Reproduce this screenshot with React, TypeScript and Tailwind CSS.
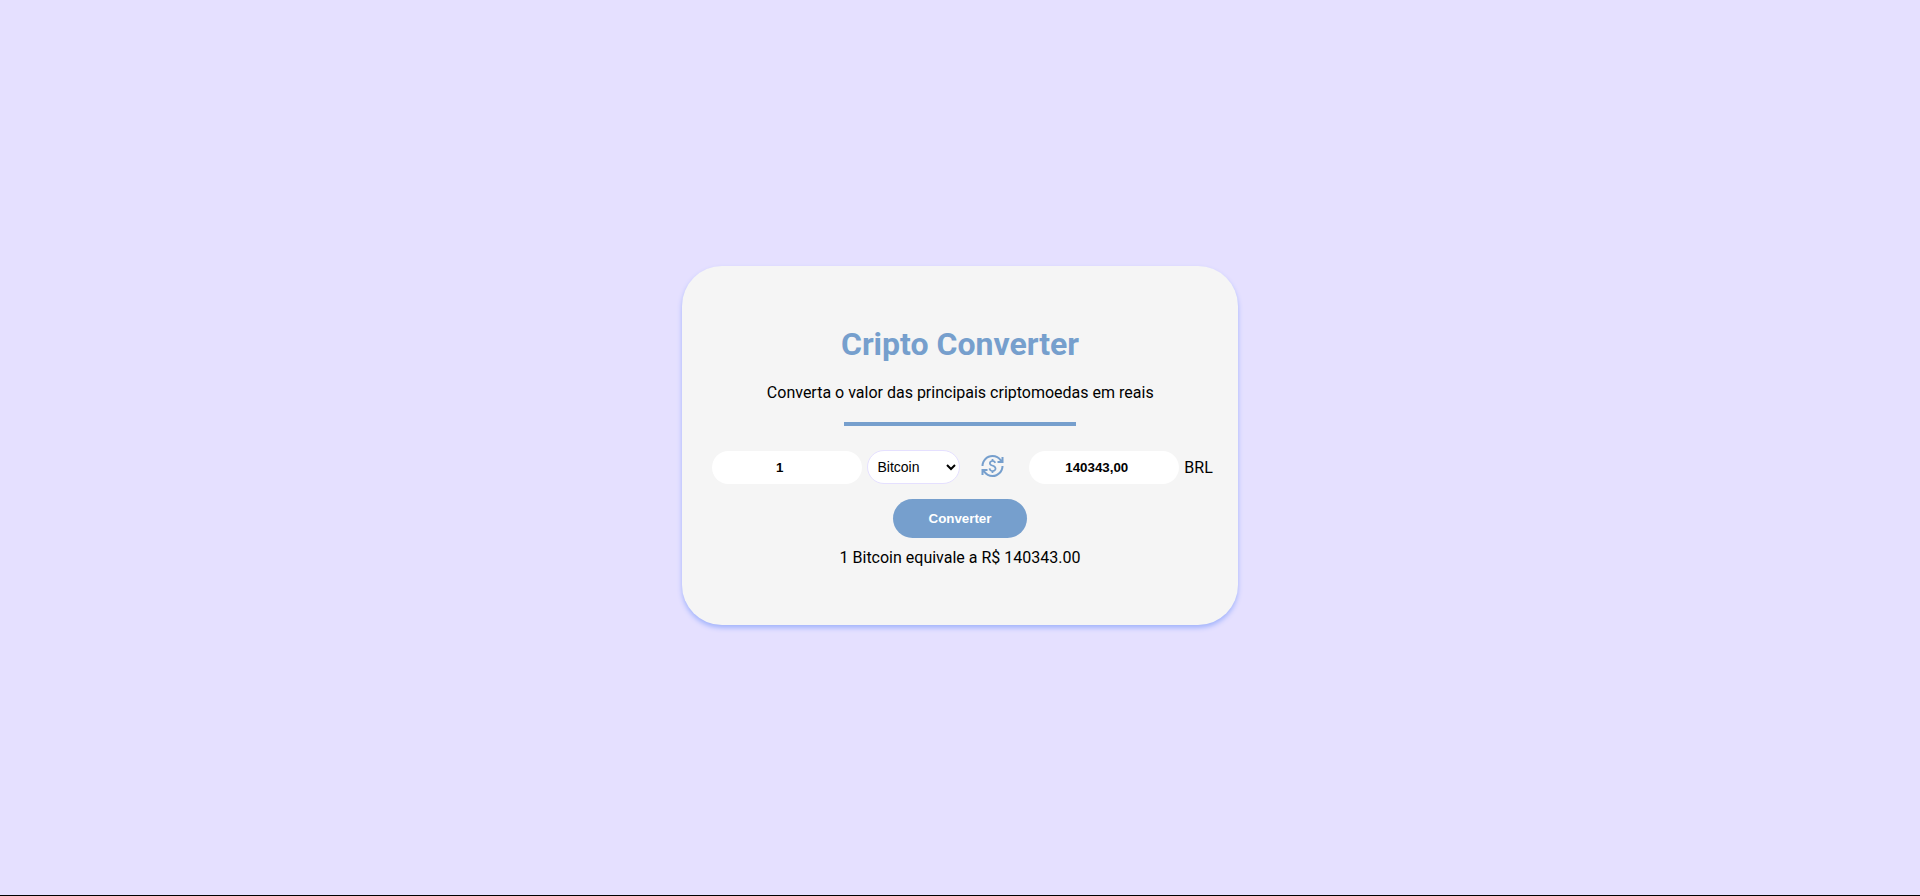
import { useState } from "react";

const coins = ["Bitcoin", "Ethereum", "Litecoin"];

const fieldClass =
  "mt-px h-[33px] w-[150px] rounded-[20px] bg-white pr-[14.5px] text-center font-['Liberation_Sans',Arial,sans-serif] text-[13.333px] font-bold text-black outline-none";

function ExchangeIcon({ className }: { className: string }) {
  return (
    <svg viewBox="0 -960 960 960" fill="currentColor" className={className} aria-hidden="true">
      <path
        transform="translate(20 0)"
        d="M480-40q-112 0-206-51T120-227v107H40v-240h240v80h-99q48 72 126.5 116T480-120q75 0 140.5-28.5t114-77q48.5-48.5 77-114T840-480h80q0 91-34.5 171T791-169q-60 60-140 94.5T480-40Zm-36-160v-52q-47-11-76.5-40.5T324-370l66-26q12 41 37.5 61.5T486-314q33 0 56.5-15.5T566-378q0-29-24.5-47T454-466q-59-21-86.5-50T340-592q0-41 28.5-74.5T446-710v-50h70v50q36 3 65.5 29t40.5 61l-64 26q-8-23-26-38.5T482-648q-35 0-53.5 15T410-592q0 26 23 41t83 35q72 26 96 61t24 77q0 29-10 51t-26.5 37.5Q583-274 561-264.5T514-250v50h-70ZM40-480q0-91 34.5-171T169-791q60-60 140-94.5T480-920q112 0 206 51t154 136v-107h80v240H680v-80h99q-48-72-126.5-116T480-840q-75 0-140.5 28.5t-114 77q-48.5 48.5-77 114T120-480H40Z"
      />
    </svg>
  );
}

export default function App() {
  const [amount, setAmount] = useState("1");
  const [coin, setCoin] = useState("Bitcoin");

  return (
    <div className="flex h-screen flex-col bg-black font-['Roboto',sans-serif] text-base text-black">
      <main className="flex h-[895px] items-start justify-center bg-[#e5e0ff] pt-[266px]">
        <section className="flex h-[359px] w-[556px] flex-col items-center rounded-[40px] bg-[#f5f5f5] pt-[59px] shadow-[0_3px_5px_#a3b4fc]">
          <h1 className="text-[32px] leading-[38px] font-bold text-[#769fcd]">Cripto Converter</h1>
          <p className="mt-[20px] pl-[0.5px] leading-[19px]">Converta o valor das principais criptomoedas em reais</p>
          <hr className="mt-[20px] h-1 w-[232px] border-0 bg-[#769fcd]" />
          <form className="mt-6 flex w-full flex-col items-center" onSubmit={(e) => e.preventDefault()}>
            <div className="flex h-[34px] w-full items-center pl-[30px]">
              <input className={fieldClass} value={amount} onChange={(e) => setAmount(e.target.value)} />
              <select
                className="ml-[5px] h-[34px] w-[93px] rounded-[20px] border border-[#e5e0ff] bg-white pr-[5px] pl-[5.5px] font-['Liberation_Sans',Arial,sans-serif] text-[14px] text-black outline-none"
                value={coin}
                onChange={(e) => setCoin(e.target.value)}
              >
                {coins.map((name) => (
                  <option key={name}>{name}</option>
                ))}
              </select>
              <ExchangeIcon className="mb-[2px] ml-[20px] size-6 text-[#769fcd]" />
              <input className={`${fieldClass} ml-[25px]`} value="140343,00" readOnly />
              <span className="ml-[5.3px] leading-[19px]">BRL</span>
            </div>
            <button
              type="submit"
              className="mt-[15px] h-[39px] w-[134px] rounded-[20px] bg-[#769fcd] font-['Liberation_Sans',Arial,sans-serif] text-[13.333px] font-bold text-white"
            >
              Converter
            </button>
          </form>
          <p className="mt-[10px] leading-[19px]">1 Bitcoin equivale a R$ 140343.00</p>
        </section>
      </main>
    </div>
  );
}
